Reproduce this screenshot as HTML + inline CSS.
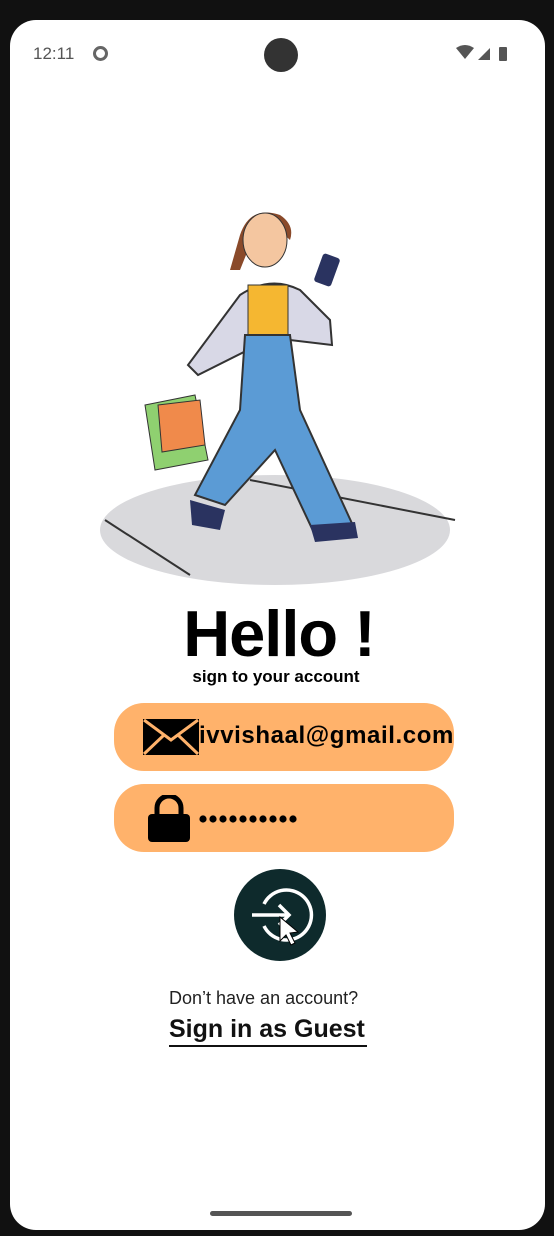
<!DOCTYPE html>
<html><head><style>
*{margin:0;padding:0;box-sizing:border-box}
body{width:554px;height:1236px;background:#111;position:relative;overflow:hidden;font-family:"Liberation Sans",sans-serif}
.scr{position:absolute;left:10px;top:20px;width:535px;height:1210px;background:#fff;border-radius:26px}
.a{position:absolute}
.field{position:absolute;left:114px;width:340px;height:68px;background:#FFB26B;border-radius:30px}
</style></head><body>
<div class="scr"></div>
<div class="a" style="left:33px;top:44px;font-size:17px;color:#555">12:11</div>
<div class="a" style="left:93px;top:46px;width:15px;height:15px;border-radius:50%;border:3px solid #666"></div>
<div class="a" style="left:264px;top:38px;width:34px;height:34px;border-radius:50%;background:#333"></div>
<svg class="a" style="left:456px;top:44px" width="64" height="20"><path d="M0 4 Q9 -2 18 4 L9 15Z" fill="#555"/><path d="M22 16 L34 4 L34 16Z" fill="#555"/><rect x="43" y="3" width="8" height="14" rx="1" fill="#555"/></svg>
<svg class="a" style="left:100px;top:200px" width="360" height="390">
<ellipse cx="175" cy="330" rx="175" ry="55" fill="#cfcfd3" opacity=".8"/>
<path d="M5 320 L90 375" stroke="#333" stroke-width="2"/>
<path d="M150 280 L355 320" stroke="#333" stroke-width="2"/>
<path d="M140 35 Q150 5 180 15 Q195 25 190 40 Q170 20 150 45 L140 70 L130 70Z" fill="#8a4a2a"/>
<path d="M140 95 Q170 75 200 90 L230 120 L232 145 L190 140 L148 150 L98 175 L88 165 Z" fill="#d8d8e6" stroke="#333" stroke-width="2"/>
<rect x="148" y="85" width="40" height="60" fill="#f5b731" stroke="#333"/>
<path d="M145 135 L190 135 L200 210 L255 330 L215 335 L175 250 L125 305 L95 295 L140 210 Z" fill="#5b9bd5" stroke="#333" stroke-width="2"/>
<path d="M90 300 L125 310 L120 330 L92 325Z" fill="#2a3360"/>
<path d="M210 325 L255 322 L258 338 L215 342Z" fill="#2a3360"/>
<ellipse cx="165" cy="40" rx="22" ry="27" fill="#f4c6a0" stroke="#333"/>
<rect x="218" y="55" width="18" height="30" rx="3" fill="#2a3360" transform="rotate(20 227 70)"/>
<path d="M45 205 L95 195 L108 260 L55 270Z" fill="#8fd070" stroke="#333"/>
<path d="M58 205 L100 200 L105 245 L62 252Z" fill="#f08a4b" stroke="#333"/>
</svg>
<div class="a" style="left:0;width:558px;top:596px;text-align:center;font-size:65px;font-weight:bold;color:#000;letter-spacing:-1px">Hello !</div>
<div class="a" style="left:0;width:552px;top:667px;text-align:center;font-size:17px;font-weight:bold">sign to your account</div>
<div class="field" style="top:703px"></div>
<svg class="a" style="left:142px;top:718px" width="58" height="38"><rect x="1" y="1" width="56" height="36" fill="#000"/><path d="M2 2 L29 22 L56 2 M2 36 L22 17 M56 36 L36 17" stroke="#FFB26B" stroke-width="3" fill="none"/></svg>
<div class="a" style="left:199px;top:722px;font-size:24px;font-weight:bold;letter-spacing:0.6px">ivvishaal@gmail.com</div>
<div class="field" style="top:784px"></div>
<svg class="a" style="left:146px;top:795px" width="46" height="48"><path d="M11 20 V13 A12 12 0 0 1 35 13 V20" stroke="#000" stroke-width="5" fill="none"/><rect x="2" y="19" width="42" height="28" rx="4" fill="#000"/></svg>
<svg class="a" style="left:199px;top:813px" width="100" height="12"><g fill="#000"><circle cx="4" cy="6" r="3.6"/><circle cx="14" cy="6" r="3.6"/><circle cx="24" cy="6" r="3.6"/><circle cx="34" cy="6" r="3.6"/><circle cx="44" cy="6" r="3.6"/><circle cx="54" cy="6" r="3.6"/><circle cx="64" cy="6" r="3.6"/><circle cx="74" cy="6" r="3.6"/><circle cx="84" cy="6" r="3.6"/><circle cx="94" cy="6" r="3.6"/></g></svg>
<div class="a" style="left:234px;top:869px;width:92px;height:92px;border-radius:50%;background:#0e2a2c"></div>
<svg class="a" style="left:234px;top:869px" width="92" height="92"><path d="M30 35 A25 25 0 1 1 30 57" stroke="#fff" stroke-width="3.5" fill="none"/><path d="M18 46 H55 M45 36 L55 46 L45 56" stroke="#fff" stroke-width="3.5" fill="none"/><path d="M46 48 L46 72 L52 66 L57 76 L61 74 L56 64 L64 63Z" fill="#fff" stroke="#000" stroke-width="1"/></svg>
<div class="a" style="left:169px;top:988px;font-size:18px;color:#222">Don’t have an account?</div>
<div class="a" style="left:169px;top:1015px;font-size:25px;font-weight:bold;color:#111;border-bottom:2px solid #111;padding-bottom:1px;width:198px">Sign in as Guest</div>
<div class="a" style="left:210px;top:1211px;width:142px;height:5px;border-radius:3px;background:#555"></div>
</body></html>
